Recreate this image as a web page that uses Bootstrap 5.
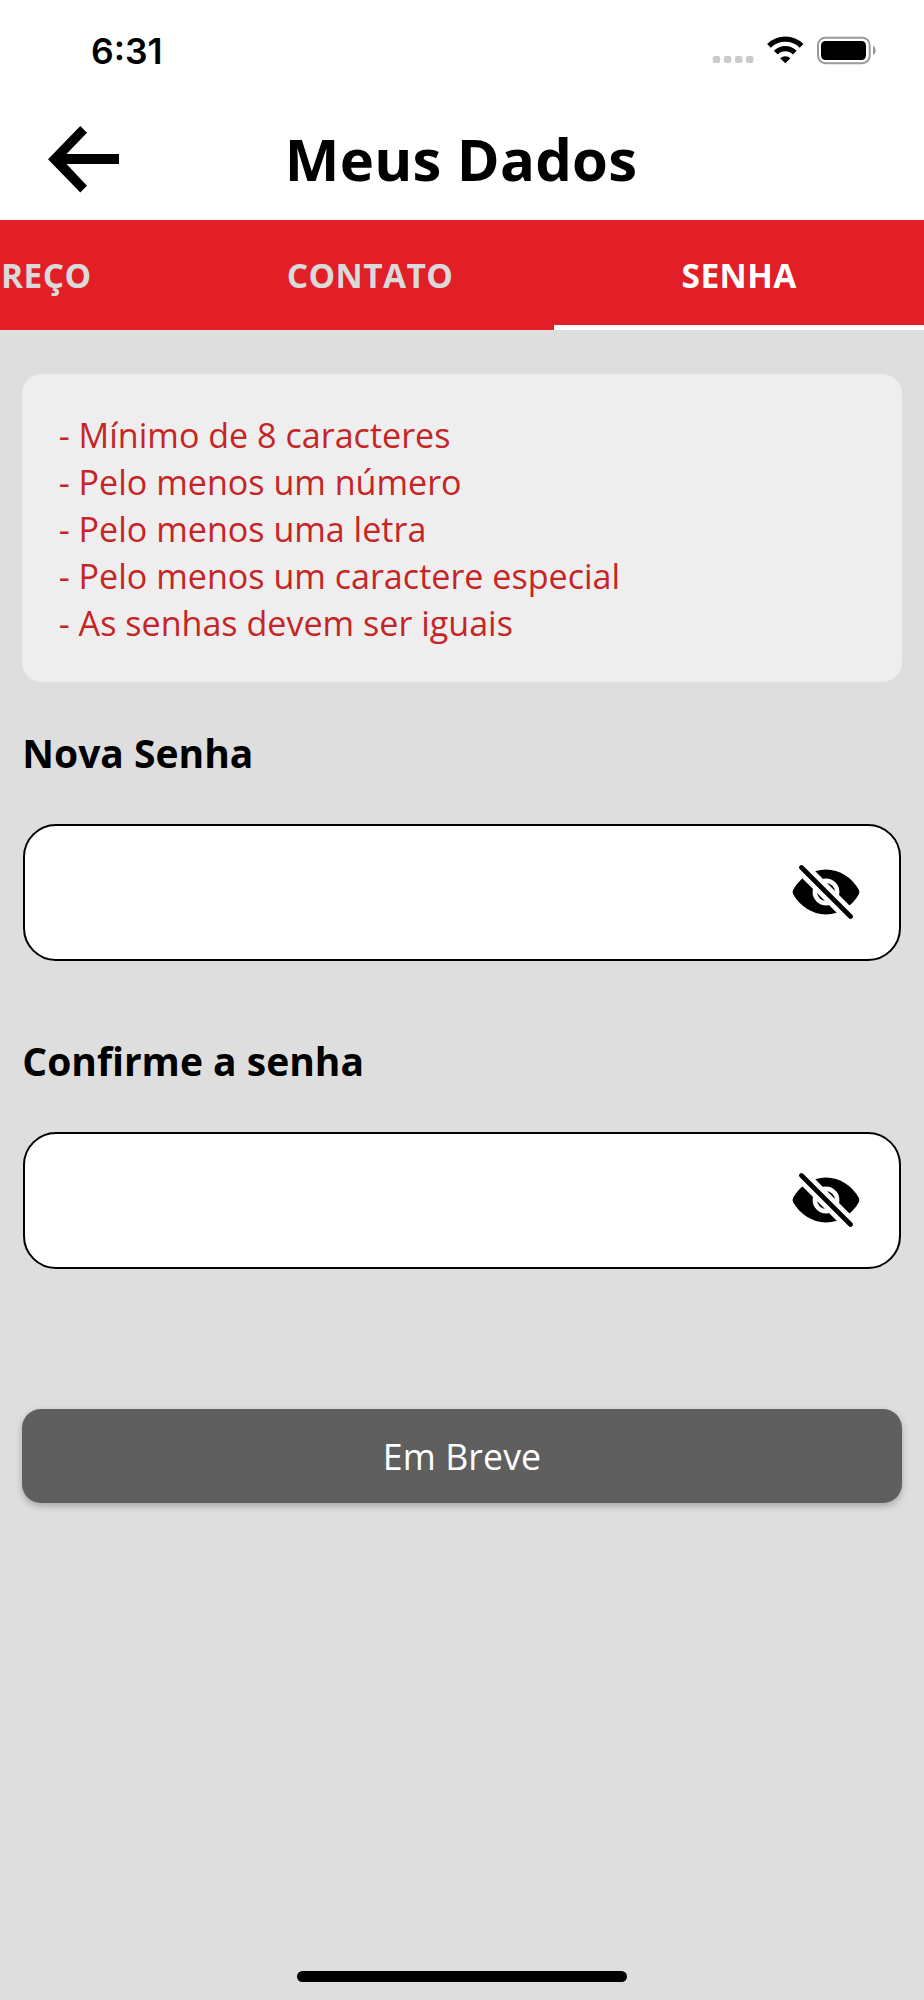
<!DOCTYPE html>
<html lang="pt-BR">
<head>
<meta charset="utf-8">
<meta name="viewport" content="width=device-width, initial-scale=1">
<title>Meus Dados</title>
<link href="https://cdn.jsdelivr.net/npm/bootstrap@5.3.0/dist/css/bootstrap.min.css" rel="stylesheet">
<style>
  body { background: #dedede; color: #000; font-family: "Open Sans", sans-serif; line-height: 1.362; }
  .screen { height: 2000px; }
  .status { height: 102px; padding: 0 48px 0 91px; }
  .clock { font: 600 35.5px/1 Inter, sans-serif; padding-top: 1px; }
  .topbar { height: 118px; display: grid; grid-template-columns: 130px 1fr 130px; align-items: center; }
  .back { padding-left: 47.5px; }
  .title { font-size: 58px; font-weight: 700; line-height: 80px; letter-spacing: .2px; padding: 0 2px 5px 0; }
  .tabs { height: 110px; background: #e21e27; }
  .tabs .nav-link { flex: 0 0 369.6px; height: 110px; border-radius: 0; padding: 2px 0 0 1px; color: #dadada; font-size: 33.5px; font-weight: 700; letter-spacing: .4px; display: flex; align-items: center; justify-content: center; }
  .tabs .nav-link.scrolled { flex-basis: 184.8px; justify-content: flex-start; }
  .tabs .nav-link.active { color: #fff; border-bottom: 5px solid #fff; padding: 7px 0 0; }
  .content { padding: 44px 22.3px 0; }
  .rules { background: #eee; border-radius: 20px; height: 308px; padding: 38px 36.5px 0; color: #c62526; font-size: 34.1px; line-height: 46.9px; }
  .field-label { font-size: 39px; font-weight: 700; line-height: 54px; margin: 44px 0 43.5px; }
  .field + .field-label { margin-top: 73.5px; }
  .field { height: 137px; border: 2.2px solid #000; border-radius: 33px; background: #fff; margin: 0 .3px; padding-right: 38.7px; }
  .field .form-control, .field .form-control:focus { background: none; border: 0; box-shadow: none; height: 100%; font-size: 34px; }
  .soon { height: 94px; margin-top: 140.5px; padding-top: 8px; border-radius: 19px; background: #5f5f5f; border: 0; color: #fff; font-size: 35.7px; letter-spacing: .1px; box-shadow: 0 3px 7px rgba(0,0,0,.25); }
  .home-bar { width: 330px; height: 11px; border-radius: 6px; background: #000; margin-bottom: 18px; }
</style>
</head>
<body>
<svg class="position-absolute" width="0" height="0" aria-hidden="true">
  <defs>
    <mask id="cut" maskUnits="userSpaceOnUse" x="0" y="0" width="70" height="54">
      <rect width="70" height="54" fill="#fff"/>
      <circle cx="35" cy="27" r="11.200" fill="none" stroke="#000" stroke-width="4.400"/>
      <path d="M-5-13 75 67" stroke="#000" stroke-width="14.200"/>
    </mask>
    <symbol id="eye-off" viewBox="0 0 70 54">
      <path mask="url(#cut)" d="M2.300 29.600Q.7 27 2.300 24.400C9 13 21 4.500 35 4.500S61 13 67.700 24.400Q69.300 27 67.700 29.600C61 41 49 49.500 35 49.500S9 41 2.300 29.600Z"/>
      <path d="M10.500 2.500 59.500 51.500" fill="none" stroke="#000" stroke-width="4.700" stroke-linecap="round"/>
    </symbol>
  </defs>
</svg>
<div class="screen d-flex flex-column overflow-hidden">
  <div class="status bg-white d-flex align-items-center justify-content-between">
    <span class="clock">6:31</span>
    <svg width="165" height="32" viewBox="0 0 165 32" class="flex-shrink-0">
      <g fill="#cbcbcb"><rect x="1.700" y="21" width="7.500" height="7" rx="2"/><rect x="12.800" y="21" width="7.500" height="7" rx="2"/><rect x="24" y="21" width="7.500" height="7" rx="2"/><rect x="35" y="21" width="7.500" height="7" rx="2"/></g>
      <g fill="none" stroke="#000" stroke-width="5.300"><path d="M58 10.800A23 23 0 0 1 90.600 10.800"/><path d="M64.800 17.600A13.400 13.400 0 0 1 83.800 17.600"/></g>
      <path d="M74.300 28.300 69.200 23.200A7.600 7.600 0 0 1 79.400 23.200Z"/>
      <rect x="107" y="2.700" width="51.700" height="25.500" rx="7.500" fill="none" stroke="#999" stroke-width="2"/>
      <rect x="110" y="6" width="45" height="19" rx="4.500"/>
      <path d="M162 10.700Q164.700 12 164.700 15.400T162 20Z" fill="#999"/>
    </svg>
  </div>
  <header class="topbar bg-white">
    <a href="#" aria-label="Voltar" class="back"><svg class="d-block" width="72" height="70" viewBox="0 0 72 70"><path d="M0 33.300 32.300 0 39 6.700 18.500 28H71V38H18.500L39 59.700 32.300 66.500Z"/></svg></a>
    <h1 class="title text-center m-0">Meus Dados</h1>
  </header>
  <nav class="tabs nav flex-nowrap">
    <a class="nav-link scrolled" href="#">REÇO</a>
    <a class="nav-link" href="#">CONTATO</a>
    <a class="nav-link active" href="#">SENHA</a>
  </nav>
  <main class="content flex-grow-1">
    <ul class="rules list-unstyled mb-0">
      <li>- Mínimo de 8 caracteres</li>
      <li>- Pelo menos um número</li>
      <li>- Pelo menos uma letra</li>
      <li>- Pelo menos um caractere especial</li>
      <li>- As senhas devem ser iguais</li>
    </ul>
    <label class="field-label d-block" for="nova">Nova Senha</label>
    <div class="field d-flex align-items-center"><input id="nova" type="password" class="form-control"><svg class="flex-shrink-0" width="70" height="54"><use href="#eye-off"/></svg></div>
    <label class="field-label d-block" for="conf">Confirme a senha</label>
    <div class="field d-flex align-items-center"><input id="conf" type="password" class="form-control"><svg class="flex-shrink-0" width="70" height="54"><use href="#eye-off"/></svg></div>
    <button class="soon btn w-100">Em Breve</button>
  </main>
  <div class="home-bar mx-auto"></div>
</div>
<script src="https://cdn.jsdelivr.net/npm/bootstrap@5.3.0/dist/js/bootstrap.bundle.min.js"></script>
</body>
</html>
